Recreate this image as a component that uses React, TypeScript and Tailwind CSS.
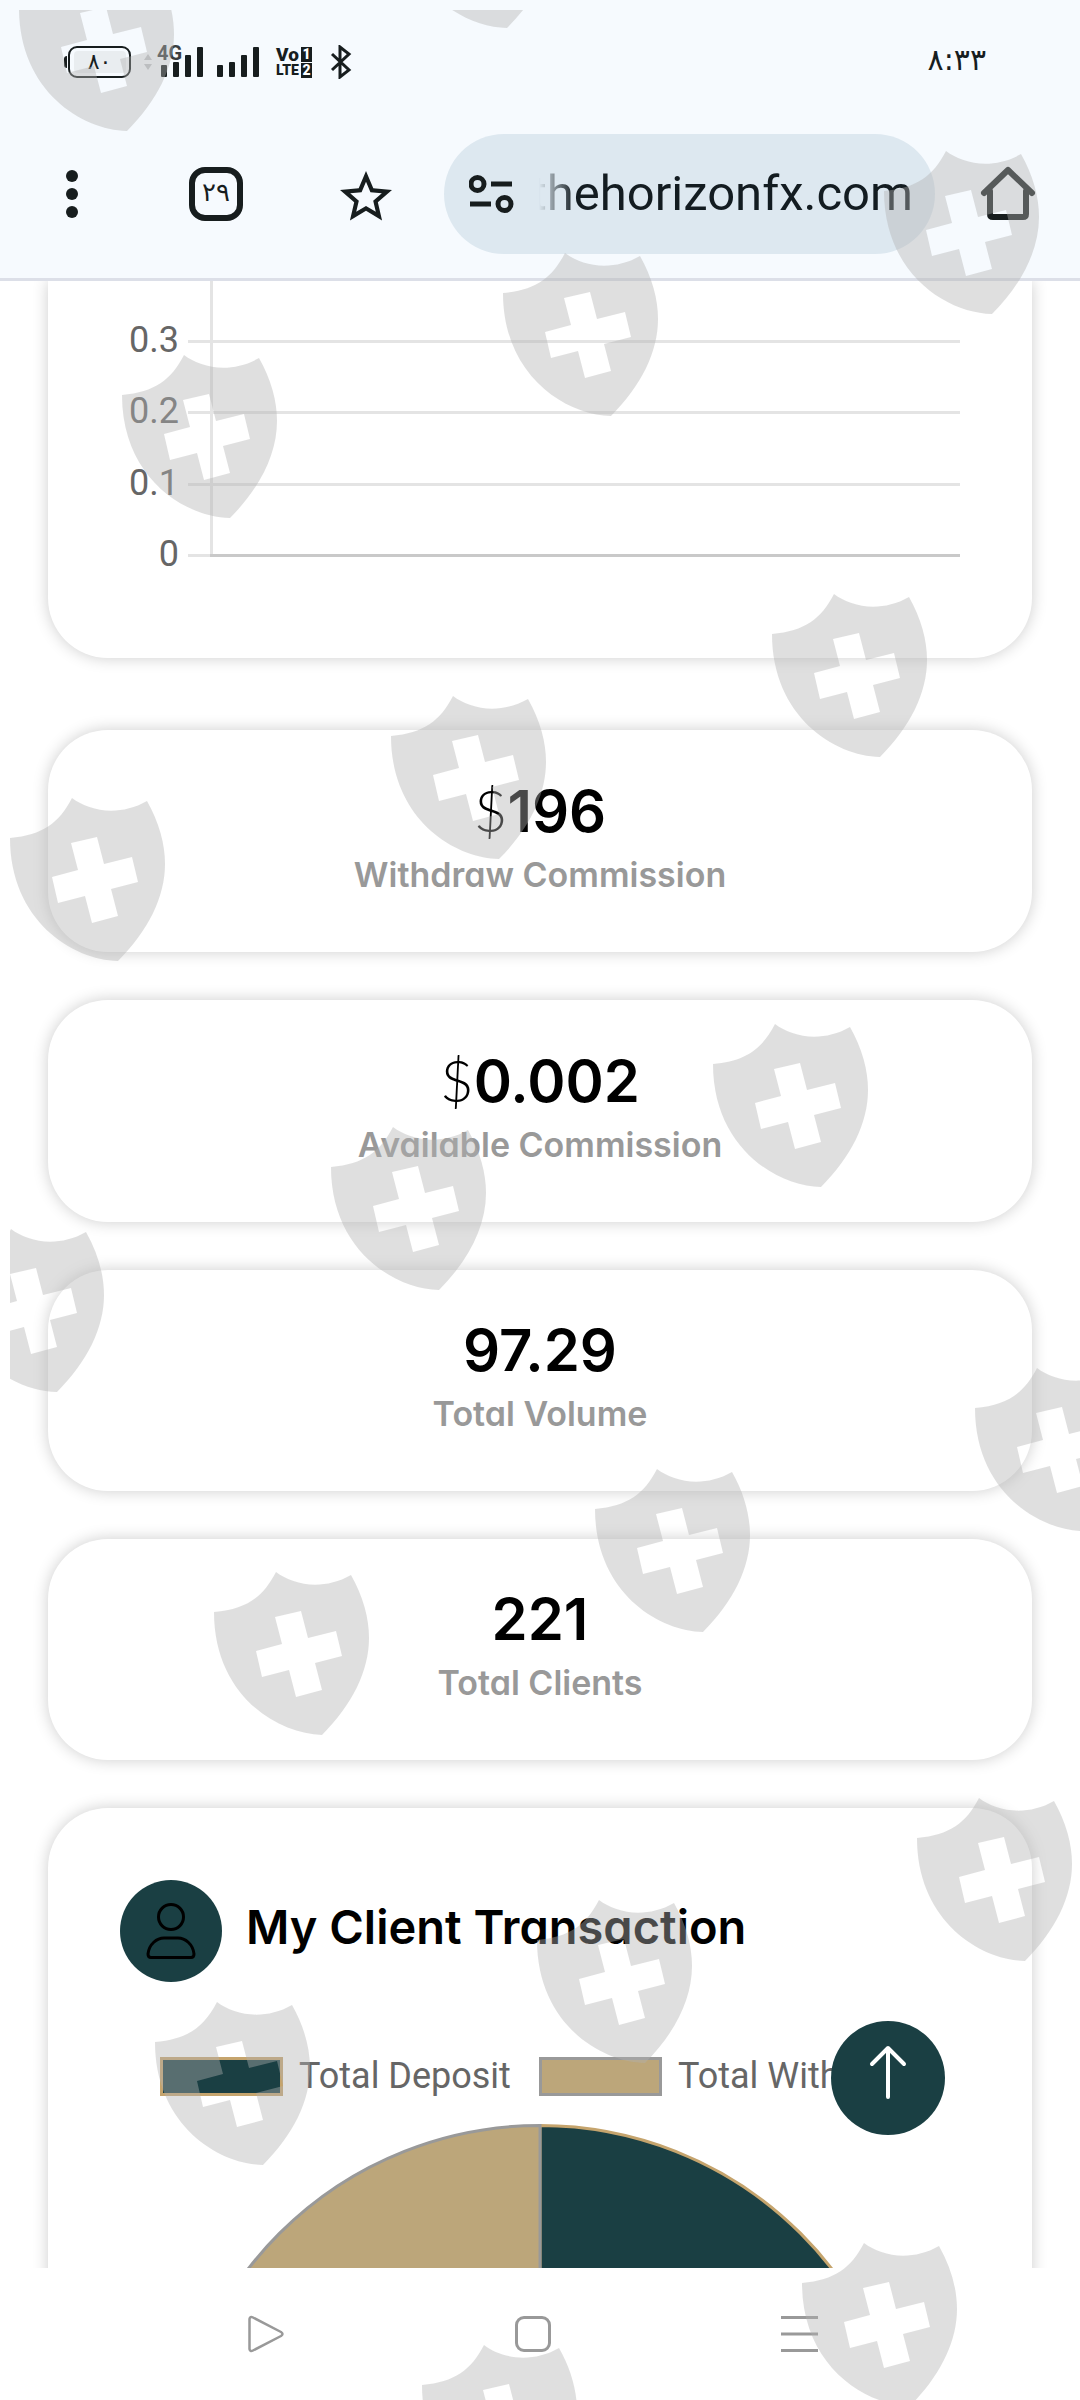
import React from "react";

const shields: [number, number][] = [
  [19, -32], [399, -135], [884, 151], [503, 253], [122, 355], [772, 594],
  [391, 696], [10, 798], [713, 1024], [331, 1127], [-51, 1229], [975, 1368],
  [595, 1469], [214, 1572], [917, 1798], [537, 1900], [155, 2002], [802, 2243], [422, 2345],
];

const stats = [
  { currency: "$", value: "196", label: "Withdraw Commission" },
  { currency: "$", value: "0.002", label: "Available Commission" },
  { currency: "", value: "97.29", label: "Total Volume" },
  { currency: "", value: "221", label: "Total Clients" },
];

const ticks = [
  { label: "0.3", y: 60 },
  { label: "0.2", y: 131 },
  { label: "0.1", y: 203 },
];

function Watermark() {
  return (
    <svg className="pointer-events-none absolute inset-0 h-full w-full" aria-hidden="true">
      <defs>
        <clipPath id="mark-area">
          <rect x="10" y="10" width="100%" height="100%" />
        </clipPath>
        <path
          id="shield"
          fillRule="evenodd"
          d="M62 0C79 13 109 19 137 3C149 24 155 46 155 66C155 99 138 133 108 163C62 162 0 122 0 40C33 37 49 25 62 0ZM61 45L68 72L42 79L48 105L75 98L82 125L108 118L101 91L128 84L122 59L94 66L87 39Z"
        />
      </defs>
      <g clipPath="url(#mark-area)" fill="#b2b2b2" fillOpacity="0.41">
        {shields.map(([x, y]) => (
          <use key={`${x}-${y}`} href="#shield" x={x} y={y} />
        ))}
      </g>
    </svg>
  );
}

function Signal() {
  return (
    <svg width="42" height="30" viewBox="0 0 42 30" fill="#171d1e">
      <rect x="0" y="18" width="6" height="12" rx="1" />
      <rect x="12" y="15" width="6" height="15" rx="1" />
      <rect x="24" y="8" width="6" height="22" rx="1" />
      <rect x="36" y="0" width="6" height="30" rx="1" />
    </svg>
  );
}

function StatusBar() {
  return (
    <div className="flex h-[124px] items-center pr-[94px] pl-16 text-[#171d1e]">
      <div className="h-3 w-[3px] rounded-l bg-[#171d1e]" />
      <div className="ml-px flex h-8 w-[63px] items-center justify-center rounded-[9px] border-2 border-[#171d1e]">
        <div className="flex h-[22px] w-[52px] items-center justify-center rounded bg-[#e9edf0] font-['DejaVu_Sans',sans-serif] text-[22px] leading-none">
          ٨٠
        </div>
      </div>
      <svg className="ml-3" width="10" height="16" viewBox="0 0 10 16" fill="#c3c7ca">
        <path d="M5 0L9 6H1ZM1 10H9L5 16Z" />
      </svg>
      <div className="relative ml-2 h-[30px]">
        <Signal />
        <span className="absolute -top-1 -left-1 text-[20px] leading-5 font-bold text-[#3a3e40]">4G</span>
      </div>
      <div className="ml-[14px] h-[30px]">
        <Signal />
      </div>
      <div className="ml-[17px] grid h-[31px] grid-cols-[24px_11px] gap-x-px gap-y-px leading-[15px] font-black">
        <span className="text-[19px]">Vo</span>
        <span className="bg-[#171d1e] text-center text-[14px] text-white">1</span>
        <span className="text-[14px]">LTE</span>
        <span className="bg-[#171d1e] text-center text-[14px] text-white">2</span>
      </div>
      <svg className="ml-[18px]" width="22" height="34" viewBox="0 0 22 34" fill="none" stroke="#171d1e" strokeWidth="3">
        <path d="M2 9L19 25L10 32V2L19 9L2 25" />
      </svg>
      <time className="ml-auto pb-1 font-['DejaVu_Sans',sans-serif] text-[30px] leading-8">٨:٣٣</time>
    </div>
  );
}

function Toolbar() {
  return (
    <div className="flex h-[154px] items-start pt-[10px] pr-[44px] pl-[60px]">
      <div className="flex h-[120px] w-full items-center">
        <button aria-label="Menu" className="w-6">
          <svg width="24" height="54" viewBox="0 0 24 54" fill="#171d1e">
            <circle cx="12" cy="9" r="6" />
            <circle cx="12" cy="27" r="6" />
            <circle cx="12" cy="45" r="6" />
          </svg>
        </button>
        <button className="ml-[105px] flex size-[54px] shrink-0 items-center justify-center rounded-2xl border-6 border-[#171d1e] pb-1 font-['DejaVu_Sans',sans-serif] text-[26px] text-[#171d1e]">
          ٢٩
        </button>
        <button aria-label="Bookmark" className="ml-[97px] w-[52px] shrink-0">
          <svg width="52" height="55" viewBox="2 0.5 20 21" fill="#171d1e">
            <path d="M22 9.240l-7.190-.62L12 2 9.190 8.630 2 9.240l5.460 4.730L5.820 21 12 17.270 18.180 21l-1.630-7.030L22 9.240zM12 15.400l-3.760 2.270 1-4.280-3.320-2.880 4.380-.38L12 6.100l1.710 4.040 4.380.38-3.320 2.880 1 4.280L12 15.400z" />
          </svg>
        </button>
        <div className="relative ml-[52px] flex h-[120px] min-w-0 flex-1 items-center rounded-full bg-[#dde8f0] pl-[25px]">
          <svg className="shrink-0" width="46" height="40" viewBox="0 0 46 40" fill="none" stroke="#171d1e" strokeWidth="5">
            <circle cx="8.500" cy="10" r="6.500" />
            <path d="M22 10H43M1 30H22" />
            <circle cx="35.500" cy="30" r="6.500" />
          </svg>
          <input
            aria-label="Address"
            readOnly
            dir="rtl"
            defaultValue="thehorizonfx.com"
            className="ml-6 w-0 min-w-0 flex-1 bg-transparent pr-[22px] text-right font-[Roboto,sans-serif] text-[49px] leading-[60px] text-[#131c21] outline-none [mask-image:linear-gradient(to_right,transparent,black_36px)]"
          />
        </div>
        <button aria-label="Home" className="ml-[45px] w-14 shrink-0">
          <svg width="56" height="56" viewBox="0 0 56 56" fill="none" stroke="#171d1e" strokeWidth="6" strokeLinecap="round" strokeLinejoin="round">
            <path d="M4 27L28 4L52 27M10 25V48Q10 51 13 51H43Q46 51 46 48V25" />
          </svg>
        </button>
      </div>
    </div>
  );
}

function ChartCard() {
  return (
    <section className="rounded-b-[60px] bg-white pb-20 shadow-[0_0_16px_rgba(0,0,0,0.2)]">
      <svg className="block w-full" viewBox="0 0 984 297" role="img" aria-label="Chart axis">
        <g stroke="#e4e4e4" strokeWidth="3">
          <path d="M163.500 0V274" />
          {ticks.map((t) => (
            <path key={t.label} d={`M140 ${t.y + 0.5}H912`} />
          ))}
          <path d="M140 274.500H164" />
        </g>
        <path d="M162 274.500H912" stroke="#c9c9c9" strokeWidth="3" />
        <g fill="#666666" fontSize="36" textAnchor="end" className="font-[Roboto,sans-serif]">
          {ticks.map((t) => (
            <text key={t.label} x="131" y={t.y + 11}>
              {t.label}
            </text>
          ))}
          <text x="131" y="285">0</text>
        </g>
      </svg>
    </section>
  );
}

function StatCard({ currency, value, label }: { currency: string; value: string; label: string }) {
  return (
    <section className="flex flex-col items-center rounded-[60px] bg-white pt-10 pb-[53px] shadow-[0_0_16px_rgba(0,0,0,0.2)]">
      <p className="text-[58px] leading-20 font-semibold text-black">
        {currency && <span className="font-[Lato,sans-serif] font-light">{currency}</span>}
        {value}
      </p>
      <p className="text-[34px] leading-12 font-semibold text-[#999999]">{label}</p>
    </section>
  );
}

function TransactionCard() {
  return (
    <section className="rounded-t-[60px] bg-white px-[72px] pt-[72px] shadow-[0_0_16px_rgba(0,0,0,0.2)]">
      <div className="flex items-center gap-6">
        <div className="flex size-[102px] shrink-0 items-center justify-center rounded-full bg-[#1a3f43]">
          <svg width="50" height="58" viewBox="0 0 50 58" fill="none" stroke="#000" strokeWidth="3">
            <circle cx="25" cy="15" r="12.500" />
            <path d="M5 55.500Q2 55.500 2 52C3 42 11 36 18 36H32C39 36 47 42 48 52Q48 55.500 45 55.500Z" />
          </svg>
        </div>
        <h2 className="pb-2 text-[47px] leading-14 font-semibold whitespace-nowrap text-black">My Client Transaction</h2>
      </div>
      <div className="mt-[70px] flex items-center pl-10 font-[Roboto,sans-serif] text-[36px] leading-12 whitespace-nowrap text-[#666666]">
        <span className="h-[39px] w-[123px] shrink-0 border-3 border-[#c5a46d] bg-[#1a3f43]" />
        <span className="ml-4">Total Deposit</span>
        <span className="ml-7 h-[39px] w-[123px] shrink-0 border-3 border-[#999999] bg-[#bca67a]" />
        <span className="ml-4">Total Withdraw</span>
      </div>
      <svg className="mx-auto mt-6 block w-[740px] max-w-full" viewBox="0 0 740 740" role="img" aria-label="Deposit and withdraw share">
        <path d="M370 1.500A368.500 368.500 0 0 1 370 738.500Z" fill="#1a3f43" stroke="#c5a46d" strokeWidth="3" />
        <path d="M370 1.500A368.500 368.500 0 0 0 370 738.500Z" fill="#bca67a" stroke="#999999" strokeWidth="3" />
      </svg>
    </section>
  );
}

function NavBar() {
  return (
    <nav className="grid h-[132px] shrink-0 grid-cols-3 items-center bg-white pr-[147px] pl-[133px]">
      <button aria-label="Back" className="flex justify-center">
        <svg width="38" height="38" viewBox="0 0 38 38" fill="none" stroke="#999" strokeWidth="2.500" strokeLinejoin="round">
          <path d="M2.500 4V34Q3 37 6 35.500L34 21Q37 19 34 17L6 2.500Q3 1 2.500 4Z" />
        </svg>
      </button>
      <button aria-label="Home screen" className="flex justify-center">
        <span className="size-9 rounded-[9px] border-3 border-[#999999]" />
      </button>
      <button aria-label="Recent apps" className="flex justify-center">
        <svg width="37" height="36" viewBox="0 0 37 36" stroke="#999" strokeWidth="3">
          <path d="M0 1.500H37M0 18H37M0 34.500H37" />
        </svg>
      </button>
    </nav>
  );
}

export default function App() {
  return (
    <div className="relative flex h-screen flex-col overflow-hidden bg-white font-[Inter,sans-serif] [font-feature-settings:'cv11']">
      <header className="shrink-0 border-b-3 border-[#dcdfe8] bg-[#f6fafe] font-[Roboto,'DejaVu_Sans',sans-serif]">
        <StatusBar />
        <Toolbar />
      </header>
      <main className="relative min-h-0 flex-1 overflow-hidden px-12">
        <ChartCard />
        <div className="mt-[72px] flex flex-col gap-12">
          {stats.map((s) => (
            <StatCard key={s.label} {...s} />
          ))}
          <TransactionCard />
        </div>
        <button
          aria-label="Scroll to top"
          className="absolute right-[135px] bottom-[133px] flex size-[114px] items-center justify-center rounded-full bg-[#1a3f43] pb-3"
        >
          <svg width="38" height="54" viewBox="0 0 38 54" fill="none" stroke="#fff" strokeWidth="4" strokeLinecap="round" strokeLinejoin="round">
            <path d="M19 52V3M3 19L19 3L35 19" />
          </svg>
        </button>
      </main>
      <NavBar />
      <Watermark />
    </div>
  );
}
